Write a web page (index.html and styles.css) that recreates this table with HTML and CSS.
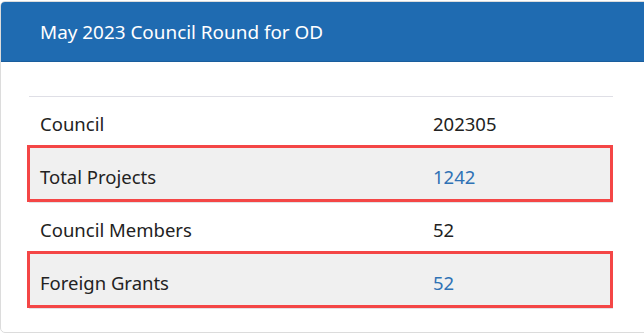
FILE: index.html
```html
<!DOCTYPE html>
<html>
<head>
<meta charset="utf-8">
<link rel="stylesheet" href="styles.css">
</head>
<body>
<div class="panel">
  <div class="panel-heading">May 2023 Council Round for OD</div>
  <div class="panel-body">
    <div class="table">
      <div class="row">
        <div class="cell label">Council</div>
        <div class="cell value">202305</div>
      </div>
      <div class="row highlight">
        <div class="cell label">Total Projects</div>
        <div class="cell value link">1242</div>
      </div>
      <div class="row">
        <div class="cell label">Council Members</div>
        <div class="cell value">52</div>
      </div>
      <div class="row highlight">
        <div class="cell label">Foreign Grants</div>
        <div class="cell value link">52</div>
      </div>
    </div>
  </div>
</div>
</body>
</html>
```
FILE: styles.css
```css
html, body {
  margin: 0;
  padding: 0;
  background: #fff;
}
body {
  font-family: "Noto Sans", "Open Sans", sans-serif;
  color: #222;
  overflow: hidden;
}
.panel {
  margin-top: 1px;
  width: 660px;
  height: 332px;
  border: 1px solid #dcdcdc;
  border-radius: 5px;
  box-sizing: border-box;
  overflow: hidden;
}
.panel-heading {
  background: #1f6bb1;
  border-bottom: 1px solid #1a5d9c;
  color: #fff;
  height: 60px;
  box-sizing: border-box;
  padding: 0 0 0 39px;
  display: flex;
  align-items: center;
  font-size: 18.9px;
}
.panel-body {
  padding: 34px 0 0 28px;
}
.table {
  width: 584px;
  border-top: 1px solid #dfdfe6;
}
.row {
  position: relative;
  z-index: 0;
  display: grid;
  grid-template-columns: 393px 1fr;
  height: 52px;
  align-items: center;
  border-bottom: 1px solid #e2e2e6;
  font-size: 18.5px;
}
.row.highlight::before {
  content: "";
  position: absolute;
  z-index: -1;
  top: -5px;
  left: -2px;
  right: 0;
  bottom: 0;
  background: #f0f0f0;
  border: 3px solid #f44646;
}
.cell {
  padding: 0 11px;
}
.link {
  color: #2f72b5;
}
```
